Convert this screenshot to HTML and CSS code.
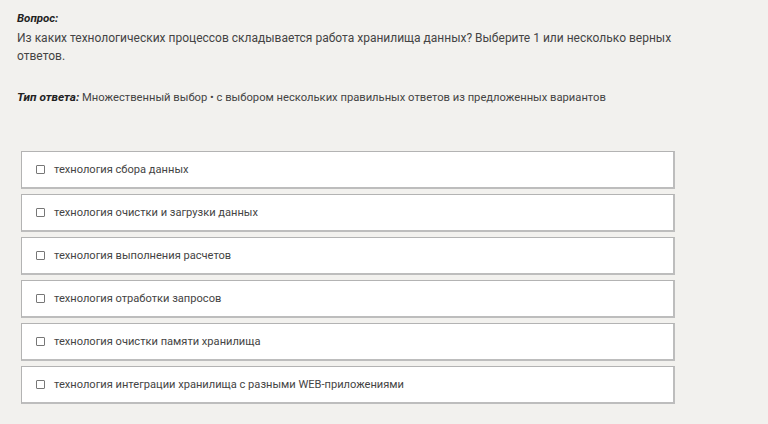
FILE: index.html
```html
<!DOCTYPE html>
<html lang="ru">
<head>
<meta charset="utf-8">
<link rel="stylesheet" href="styles.css">
</head>
<body>
<div class="page">
  <div class="question">
    <div class="label">Вопрос:</div>
    <div class="qtext">Из каких технологических процессов складывается работа хранилища данных? Выберите 1 или несколько верных ответов.</div>
  </div>
  <div class="type"><span class="label">Тип ответа:</span> Множественный выбор • с выбором нескольких правильных ответов из предложенных вариантов</div>
  <ul class="options">
    <li class="option"><span class="box"></span><span>технология сбора данных</span></li>
    <li class="option"><span class="box"></span><span>технология очистки и загрузки данных</span></li>
    <li class="option"><span class="box"></span><span>технология выполнения расчетов</span></li>
    <li class="option"><span class="box"></span><span>технология отработки запросов</span></li>
    <li class="option"><span class="box"></span><span>технология очистки памяти хранилища</span></li>
    <li class="option"><span class="box"></span><span>технология интеграции хранилища с разными WEB-приложениями</span></li>
  </ul>
</div>
</body>
</html>
```

FILE: styles.css
```css
html, body {
  margin: 0;
  padding: 0;
  background: #f2f1ee;
}
body {
  font-family: Roboto, "Open Sans", sans-serif;
  color: #444;
  font-size: 12px;
}
.page {
  padding: 10px 0 0 17px;
}
.label {
  font-weight: 700;
  font-style: italic;
  color: #222;
  font-size: 11.5px;
}
.question .label {
  line-height: 16px;
}
.qtext {
  line-height: 18px;
  width: 690px;
  margin-top: 3px;
}
.type {
  margin-top: 24px;
  line-height: 16px;
  font-size: 11.2px;
}
.type .label {
  font-size: 11.8px;
}
.options {
  list-style: none;
  margin: 45px 0 0 4px;
  padding: 0;
  width: 654px;
  display: flex;
  flex-direction: column;
  gap: 5px;
}
.option {
  height: 35px;
  background: #fff;
  border: 1px solid #b3b3b3;
  border-right-width: 2px;
  border-bottom-width: 2px;
  border-right-color: #bdbdbd;
  border-bottom-color: #bdbdbd;
  display: flex;
  align-items: center;
  padding-left: 14px;
  font-size: 11.1px;
  color: #444;
}
.box {
  width: 7px;
  height: 7px;
  border: 1px solid #777;
  border-radius: 1px;
  margin-right: 9px;
  flex: none;
}
```
